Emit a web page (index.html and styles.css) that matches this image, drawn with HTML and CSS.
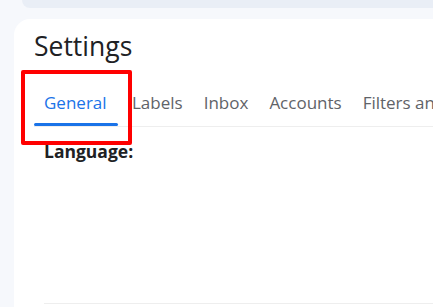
FILE: index.html
```html
<!DOCTYPE html>
<html>
<head>
  <meta charset="utf-8">
  <title>Settings</title>
  <link rel="stylesheet" href="styles.css">
</head>
<body>
  <div class="topbar"></div>

  <div class="card">
    <h1>Settings</h1>

    <div class="tabs">
      <a href="#" class="tab active">General</a>
      <a href="#" class="tab">Labels</a>
      <a href="#" class="tab">Inbox</a>
      <a href="#" class="tab">Accounts</a>
      <a href="#" class="tab">Filters and Blocked Addresses</a>
    </div>

    <div class="setting-row">
      <div class="setting-name">Language:</div>
    </div>

    <!-- highlight box drawn over the General tab -->
    <div class="highlight"></div>
  </div>
</body>
</html>
```

FILE: styles.css
```css
body {
  margin: 0;
  background: #f6f8fc;
  font-family: "Open Sans", Arial, sans-serif;
  overflow: hidden;
}

.topbar {
  margin-left: 22px;
  height: 8px;
  background: #e9eef6;
  border-bottom-left-radius: 16px;
}

.card {
  position: relative;
  margin: 11px 0 0 14px;
  padding-left: 20px;
  height: 300px;
  background: #fff;
  border-top-left-radius: 16px;
}

h1 {
  margin: 0;
  padding-top: 11px;
  font-size: 26.5px;
  font-weight: 400;
  line-height: 32px;
  color: #202124;
}

.tabs {
  display: flex;
  border-bottom: 1px solid #eeeeee;
  overflow: hidden;
  white-space: nowrap;
}

.tab {
  position: relative;
  display: block;
  flex-shrink: 0;
  padding: 29px 10px 11px;
  margin-right: 1px;
  line-height: 24px;
  font-size: 17px;
  color: #5f6368;
  text-decoration: none;
}

.tab.active {
  width: 64px;
  margin-right: 4px;
  color: #1a73e8;
}

.tab.active::after {
  content: "";
  position: absolute;
  left: 0;
  right: 0;
  bottom: 0;
  height: 3px;
  border-radius: 2px;
  background: #1a73e8;
}

.setting-row {
  margin-left: 10px;
  height: 176px;
  border-bottom: 1px solid #eeeeee;
}

.setting-name {
  padding-top: 13px;
  font-size: 17.5px;
  font-weight: 700;
  line-height: 22px;
  color: #202124;
}

.highlight {
  position: absolute;
  left: 7px;
  top: 51px;
  width: 103px;
  height: 67px;
  border: 4px solid #ff0000;
  border-radius: 2px;
}
```
